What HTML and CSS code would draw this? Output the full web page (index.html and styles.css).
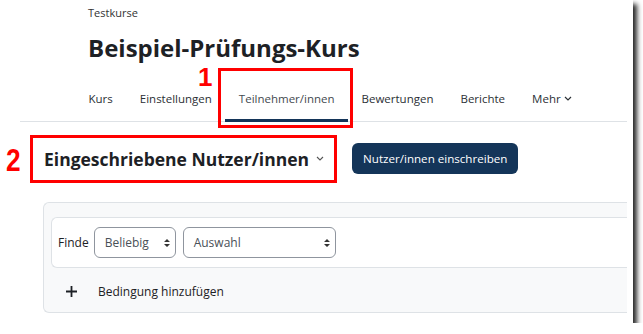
FILE: index.html
```html
<!DOCTYPE html>
<html lang="de">
<head>
<meta charset="utf-8">
<title>Teilnehmer/innen</title>
<link rel="stylesheet" href="styles.css">
</head>
<body>
<div class="shot">
  <div class="page">
    <header class="head">
      <div class="crumb">Testkurse</div>
      <h1 class="title">Beispiel-Prüfungs-Kurs</h1>
    </header>
    <nav class="nav">
      <a class="nav-item">Kurs</a>
      <a class="nav-item">Einstellungen</a>
      <a class="nav-item active">Teilnehmer/innen</a>
      <a class="nav-item">Bewertungen</a>
      <a class="nav-item">Berichte</a>
      <a class="nav-item">Mehr <svg class="chev" width="8" height="5" viewBox="0 0 8 5"><path d="M1 1l3 3 3-3" fill="none" stroke="currentColor" stroke-width="1.2"/></svg></a>
    </nav>
    <div class="toolbar">
      <h2 class="heading">Eingeschriebene Nutzer/innen <svg class="chev2" width="8" height="5" viewBox="0 0 8 5"><path d="M1 1l3 3 3-3" fill="none" stroke="#555" stroke-width="1.1"/></svg></h2>
      <button class="btn">Nutzer/innen einschreiben</button>
    </div>
    <div class="filter">
      <div class="row">
        <span class="label">Finde</span>
        <div class="select sel1">Beliebig<svg class="arr" width="6" height="10" viewBox="0 0 6 10"><path d="M0 4L3 1 6 4Z M0 6L3 9 6 6Z" fill="#333"/></svg></div>
        <div class="select sel2">Auswahl<svg class="arr" width="6" height="10" viewBox="0 0 6 10"><path d="M0 4L3 1 6 4Z M0 6L3 9 6 6Z" fill="#333"/></svg></div>
      </div>
      <div class="add">
        <svg class="plus" width="11" height="11" viewBox="0 0 11 11"><path d="M5.5 0v11M0 5.5h11" stroke="#1d2125" stroke-width="1.8"/></svg>
        <span>Bedingung hinzufügen</span>
      </div>
    </div>
  </div>
  <div class="mark mark1"></div>
  <div class="num num1">1</div>
  <div class="mark mark2"></div>
  <div class="num num2">2</div>
</div>
</body>
</html>
```

FILE: styles.css
```css
html, body {
  margin: 0;
  padding: 0;
  background: #fff;
}
body {
  font-family: "Open Sans", "Noto Sans", sans-serif;
  color: #1d2125;
}
.shot {
  position: relative;
  width: 627px;
  height: 323px;
  padding-right: 6px;
  background: #fff;
  box-shadow: 4px 4px 5px rgba(0, 0, 0, 0.85);
}
.page {
  width: 627px;
  height: 323px;
  overflow: hidden;
}
.head {
  padding: 4px 0 0 88px;
}
.crumb {
  font-size: 11px;
  line-height: 18px;
  color: #333;
}
.title {
  margin: 11px 0 0;
  font-size: 24px;
  font-weight: 700;
  line-height: 30px;
}
.nav {
  display: flex;
  margin: 18px 0 0 20px;
  padding-left: 55px;
  border-bottom: 1px solid #dee2e6;
  height: 40px;
}
.nav-item {
  display: flex;
  align-items: center;
  padding: 0 13.5px 4px;
  font-size: 11.5px;
  line-height: 13px;
  color: #2b3035;
  border-bottom: 3px solid transparent;
  margin-bottom: -1px;
}
.nav-item.active {
  border-bottom-color: #143559;
  color: #444a50;
}
.chev {
  margin-left: 3px;
}
.toolbar {
  display: flex;
  align-items: center;
  padding: 21px 0 0 44px;
}
.heading {
  margin: 0;
  font-size: 17.5px;
  font-weight: 700;
  display: flex;
  align-items: center;
  gap: 7px;
}
.btn {
  margin-left: 28px;
  height: 31px;
  padding: 0 11px;
  border: 0;
  border-radius: 6px;
  background: #143559;
  color: #fff;
  font-family: inherit;
  font-size: 11.6px;
}
.filter {
  margin: 28px 0 0 43px;
  height: 111px;
  box-sizing: border-box;
  background: #f8f9fa;
  border: 1px solid #dee2e6;
  border-right: 0;
  border-radius: 6px 0 0 6px;
  padding: 14px 0 0 7px;
}
.row {
  display: flex;
  align-items: center;
  gap: 5px;
  height: 51px;
  box-sizing: border-box;
  background: #fff;
  border: 1px solid #dee2e6;
  border-right: 0;
  border-radius: 6px 0 0 6px;
  padding-left: 6px;
  font-size: 12px;
}
.select {
  display: flex;
  align-items: center;
  justify-content: space-between;
  height: 31px;
  box-sizing: border-box;
  border: 1px solid #8f959e;
  border-radius: 6px;
  padding: 0 5px 0 10px;
  color: #495057;
}
.sel1 { width: 82px; }
.sel2 { width: 153px; margin-left: 2px; }
.add {
  display: flex;
  align-items: center;
  height: 46px;
  padding-left: 15px;
  font-size: 12px;
}
.plus {
  margin-right: 21px;
}
.mark {
  position: absolute;
  border: 3px solid #f00;
  box-sizing: border-box;
}
.mark1 {
  left: 218px;
  top: 68px;
  width: 135px;
  height: 60px;
}
.mark2 {
  left: 30px;
  top: 135px;
  width: 307px;
  height: 48px;
}
.num {
  position: absolute;
  color: #f00;
  font-family: "Liberation Sans", Arial, sans-serif;
  font-weight: 700;
  transform-origin: left top;
}
.num1 {
  left: 198px;
  top: 62.5px;
  font-size: 26px;
  line-height: 29px;
}
.num2 {
  left: 6px;
  top: 150px;
  font-size: 32px;
  line-height: 20px;
  transform: scaleX(0.82);
}
```
